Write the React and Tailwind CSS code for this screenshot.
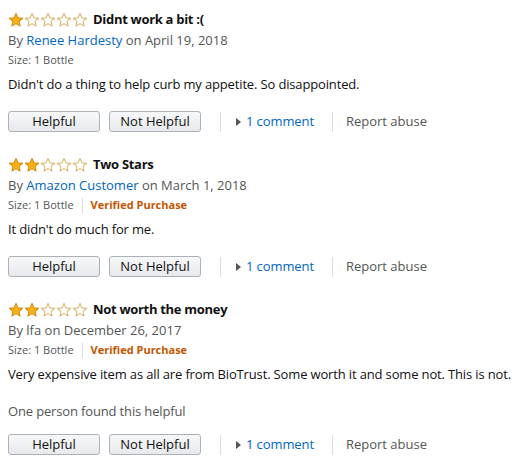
import React from "react";

const reviews = [
    {
        stars: 1,
        title: "Didnt work a bit :(",
        author: "Renee Hardesty",
        linked: true,
        date: "April 19, 2018",
        verified: false,
        body: "Didn't do a thing to help curb my appetite. So disappointed.",
        helpful: null,
    },
    {
        stars: 2,
        title: "Two Stars",
        author: "Amazon Customer",
        linked: true,
        date: "March 1, 2018",
        verified: true,
        body: "It didn't do much for me.",
        helpful: null,
    },
    {
        stars: 2,
        title: "Not worth the money",
        author: "lfa",
        linked: false,
        date: "December 26, 2017",
        verified: true,
        body: "Very expensive item as all are from BioTrust. Some worth it and some not. This is not.",
        helpful: "One person found this helpful",
    },
];

function Star({ filled }) {
    return (
        <svg width="16" height="16" viewBox="0 0 24 24" className="block">
            <path
                d="M12 2.2l2.9 6.6 7.1.6-5.4 4.7 1.6 7-6.2-3.7-6.2 3.7 1.6-7L2 9.4l7.1-.6z"
                fill={filled ? "#f7b418" : "#fff"}
                stroke={filled ? "#d78c12" : "#d9b873"}
                strokeWidth="1.6"
                strokeLinejoin="round"
            />
        </svg>
    );
}

function Button({ children }) {
    return (
        <button className="flex h-[21px] w-[92px] items-center justify-center rounded-[3px] border border-[#adb1b8] bg-gradient-to-b from-[#f7f8fa] to-[#e7e9ec] text-[13px] leading-none text-[#111]">
            {children}
        </button>
    );
}

function Review({ r }) {
    return (
        <div className="mb-[23px]">
            <div className="flex h-[20px] items-center">
                <div className="flex">
                    {[0, 1, 2, 3, 4].map((i) => (
                        <Star key={i} filled={i < r.stars} />
                    ))}
                </div>
                <span className="ml-[5px] text-[13px] font-bold tracking-[-0.3px] text-[#111]">{r.title}</span>
            </div>
            <div className="text-[13px] leading-[20px] text-[#555]">
                By{" "}
                <span className={r.linked ? "text-[#0066c0]" : "text-[#555]"}>{r.author}</span>{" "}
                on {r.date}
            </div>
            <div className="flex h-[20px] items-center text-[11px] text-[#555]">
                <span>Size: 1 Bottle</span>
                {r.verified && (
                    <>
                        <span className="mx-[8px] h-[15px] w-px bg-[#ddd]" />
                        <span className="font-bold text-[#c45500]">Verified Purchase</span>
                    </>
                )}
            </div>
            <div className="mt-[4px] text-[13px] leading-[20px] tracking-[-0.15px] text-[#111]">{r.body}</div>
            {r.helpful && (
                <div className="mt-[17px] text-[13px] leading-[20px] tracking-[-0.15px] text-[#555]">{r.helpful}</div>
            )}
            <div className={`flex items-center ${r.helpful ? "mt-[13px]" : "mt-[17px]"}`}>
                <Button>Helpful</Button>
                <div className="ml-[9px]">
                    <Button>Not Helpful</Button>
                </div>
                <span className="ml-[19px] h-[20px] w-px bg-[#ddd]" />
                <span className="ml-[15px] mr-[5px] inline-block h-0 w-0 border-y-[4px] border-l-[5px] border-y-transparent border-l-[#555]" />
                <span className="text-[13px] tracking-[-0.1px] text-[#0066c0]">1 comment</span>
                <span className="ml-[18px] h-[20px] w-px bg-[#ddd]" />
                <span className="ml-[13px] text-[13px] text-[#555]">Report abuse</span>
            </div>
        </div>
    );
}

export default function App() {
    return (
        <div className="h-[462px] w-[524px] overflow-hidden bg-white px-[8px] pt-[10px]" style={{ fontFamily: '"Open Sans", Arial, sans-serif' }}>
            {reviews.map((r, i) => (
                <Review key={i} r={r} />
            ))}
        </div>
    );
}
